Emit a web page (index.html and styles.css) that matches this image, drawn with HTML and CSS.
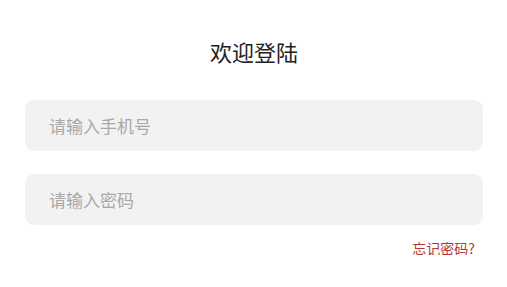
FILE: index.html
```html
<!DOCTYPE html>
<html lang="zh-CN">
<head>
<meta charset="utf-8">
<title>欢迎登陆</title>
<link rel="stylesheet" href="styles.css">
</head>
<body>
<div class="page">
  <h1 class="title">欢迎登陆</h1>
  <form class="form">
    <input class="field" type="tel" placeholder="请输入手机号">
    <input class="field" type="password" placeholder="请输入密码">
    <div class="links"><a class="forgot" href="#">忘记密码?</a></div>
  </form>
</div>
</body>
</html>
```
FILE: styles.css
```css
html, body {
  margin: 0;
  padding: 0;
  background: #ffffff;
}
body {
  font-family: "Noto Sans CJK SC", "Noto Sans", sans-serif;
}
.page {
  padding: 40px 24px 0 25px;
  display: flex;
  flex-direction: column;
}
.title {
  margin: 0;
  font-size: 22px;
  line-height: 22px;
  font-weight: 400;
  color: #222222;
  text-align: center;
}
.form {
  margin-top: 38px;
  display: flex;
  flex-direction: column;
  gap: 23px;
}
.field {
  box-sizing: border-box;
  height: 51px;
  width: 100%;
  border: none;
  outline: none;
  background: #f2f2f2;
  border-radius: 9px;
  padding: 0 24px;
  font-family: "Noto Sans CJK SC", "Noto Sans", sans-serif;
  font-size: 17px;
  color: #333333;
}
.field::placeholder {
  color: #a8a8a8;
}
.links {
  display: flex;
  justify-content: flex-end;
  margin-top: -7px;
  padding-right: 8px;
}
.forgot {
  font-size: 14px;
  line-height: 14px;
  color: #b3373a;
  text-decoration: none;
}
```
